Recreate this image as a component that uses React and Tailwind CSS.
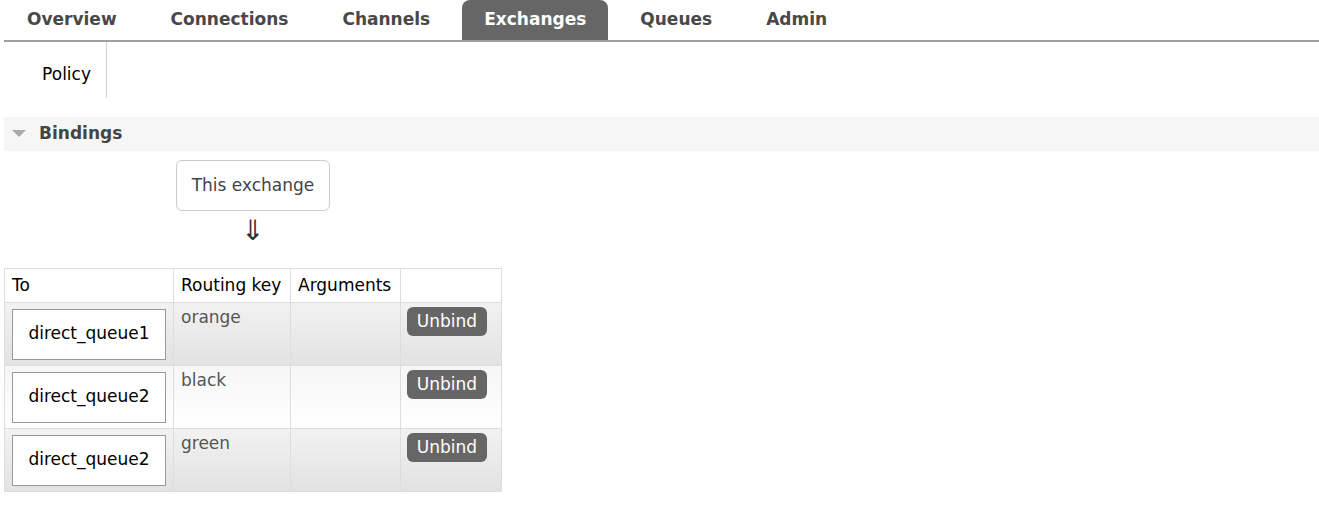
import React from 'react';

const navItems = ['Overview', 'Connections', 'Channels', 'Exchanges', 'Queues', 'Admin'];

const bindings = [
  { to: 'direct_queue1', key: 'orange', odd: true },
  { to: 'direct_queue2', key: 'black', odd: false },
  { to: 'direct_queue2', key: 'green', odd: true },
];

export default function App() {
  return (
    <div className="min-h-screen bg-white text-[#484848] font-['DejaVu_Sans',Verdana,sans-serif]">
      {/* top menu */}
      <nav className="ml-[4px] flex h-[42px] gap-[10px] border-b-2 border-[#a0a0a0] pl-[1px]">
        {navItems.map((item) => {
          const active = item === 'Exchanges';
          return (
            <span
              key={item}
              className={`flex h-[40px] items-center rounded-t-[8px] px-[22px] text-[17px] font-bold ${
                active ? 'bg-[#666] text-white' : 'text-[#484848]'
              }`}
            >
              {item}
            </span>
          );
        })}
      </nav>

      {/* sub menu */}
      <div className="flex h-[56px]">
        <div className="flex w-[107px] items-center justify-end border-r border-[#d0d0d0] pr-[15px] pt-[10px] text-[17px] text-black">
          Policy
        </div>
      </div>

      {/* section */}
      <div className="mt-[19px] ml-[4px] flex h-[34px] items-center gap-[13px] bg-[#f6f6f6] pl-[8px]">
        <svg width="14" height="8" viewBox="0 0 14 8">
          <path d="M0 0 L14 0 L7 7 Z" fill="#aaa" />
        </svg>
        <span className="text-[17px] font-bold text-[#444]">Bindings</span>
      </div>

      <div className="ml-[4px]">
        <div className="flex w-[497px] flex-col">
          <div className="ml-[172px] mt-[9px] flex h-[51px] w-[154px] items-center justify-center rounded-[6px] border border-[#ccc] text-[17px] text-[#444]">
            This exchange
          </div>
          <div className="ml-[172px] flex h-[40px] w-[154px] items-center justify-center text-[28px] leading-none text-[#333]">
            ⇓
          </div>
        </div>

        <table className="mt-[17px] border-collapse text-[17px]">
          <thead>
            <tr className="h-[34px] bg-white">
              <th className="w-[169px] border border-[#ddd] px-[7px] text-left font-normal text-black">To</th>
              <th className="w-[117px] border border-[#ddd] px-[7px] text-left font-normal text-black">Routing key</th>
              <th className="w-[110px] border border-[#ddd] px-[7px] text-left font-normal text-black">Arguments</th>
              <th className="w-[101px] border border-[#ddd]"></th>
            </tr>
          </thead>
          <tbody>
            {bindings.map((b, i) => (
              <tr
                key={i}
                className={`h-[63px] ${
                  b.odd
                    ? 'bg-gradient-to-b from-[#f2f2f2] to-[#e2e2e2]'
                    : 'bg-gradient-to-b from-[#f6f6f6] to-[#ffffff]'
                }`}
              >
                <td className="border border-[#ddd] px-[7px] align-middle">
                  <div className="flex h-[51px] w-[154px] items-center justify-center border border-[#999] bg-white text-black">
                    {b.to}
                  </div>
                </td>
                <td className="border border-[#ddd] px-[7px] pt-[2px] align-top text-[#555]">{b.key}</td>
                <td className="border border-[#ddd]"></td>
                <td className="border border-[#ddd] px-[6px] pt-[4px] align-top">
                  <button className="flex h-[29px] w-[80px] items-center justify-center rounded-[6px] bg-[#666] text-white">
                    Unbind
                  </button>
                </td>
              </tr>
            ))}
          </tbody>
        </table>
      </div>
    </div>
  );
}
